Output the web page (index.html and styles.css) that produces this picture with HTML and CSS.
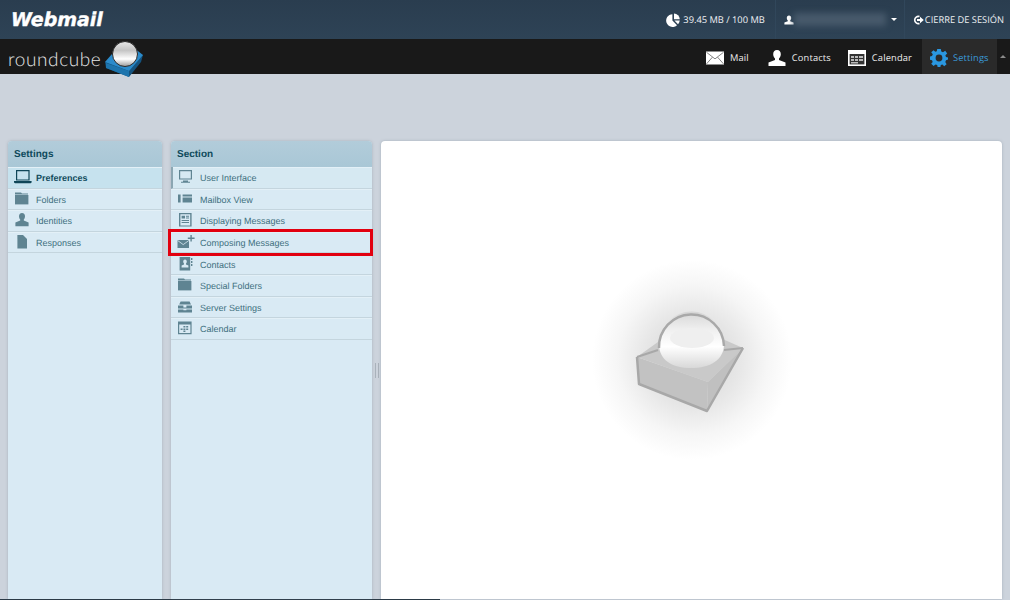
FILE: index.html
```html
<!DOCTYPE html>
<html lang="en">
<head>
  <meta charset="UTF-8" />
  <title>Roundcube Webmail - Settings</title>
  <link rel="stylesheet" href="styles.css">
</head>
<body>
  <!-- cPanel bar -->
  <div class="topbar">
    <div class="webmail-logo">Webmail</div>
    <div class="top-items">
      <div class="top-item quota">
        <svg class="top-icon" viewBox="0 0 14 14"><path d="M6.4 1.2V7.6L11 12.2A6.4 6.4 0 1 1 6.4 1.2Z"/><path d="M8 0.4A6.2 6.2 0 0 1 13.8 6.2H8Z"/><path d="M8.4 7.6H13.8A6.4 6.4 0 0 1 12 11.2Z"/></svg>
        <span>39.45 MB / 100 MB</span>
      </div>
      <div class="top-item user">
        <svg class="user-icon" viewBox="0 0 10 10"><path d="M5 0.5C6.5 0.5 7.2 1.7 7.2 3.1C7.2 4.2 6.7 5.2 6.2 5.6V6.3L9.6 7.6V9.6H0.4V7.6L3.8 6.3V5.6C3.3 5.2 2.8 4.2 2.8 3.1C2.8 1.7 3.5 0.5 5 0.5Z"/></svg>
        <div class="user-blur"></div>
        <div class="caret-down"></div>
      </div>
      <div class="top-item logout">
        <svg class="logout-icon" viewBox="0 0 11 10"><path d="M6.5 1.6A3.6 3.6 0 1 0 6.5 8.4" fill="none" stroke="#fff" stroke-width="1.6"/><path d="M4 3.9H7V1.8L10.8 5L7 8.2V6.1H4Z"/></svg>
        <span>CIERRE DE SESIÓN</span>
      </div>
    </div>
  </div>

  <!-- Roundcube task bar -->
  <div class="navbar">
    <div class="rc-logo">
      <span class="rc-name">roundcube</span>
      <svg class="rc-cube" viewBox="0 0 40 38">
        <defs>
          <linearGradient id="ball" x1="0" y1="0" x2="0" y2="1">
            <stop offset="0" stop-color="#e8e8e8"/>
            <stop offset="0.35" stop-color="#c4c4c4"/>
            <stop offset="0.7" stop-color="#fff"/>
            <stop offset="1" stop-color="#9a9a9a"/>
          </linearGradient>
        </defs>
        <path d="M1 22L39 15L37 22L25 37L2 28Z" fill="#14537f"/>
        <path d="M1 22L25 31L39 15L30 8L8 14Z" fill="#2b8bcb"/>
        <path d="M2 23L25 31L25 37L2 28Z" fill="#1d74ad"/>
        <circle cx="21" cy="14" r="12.5" fill="url(#ball)" stroke="#2a2a2a" stroke-width="1"/>
      </svg>
    </div>
    <div class="tasks">
      <a class="task task-mail">
        <svg class="task-icon" viewBox="0 0 18 13"><path d="M0 0H18V13H0Z" fill="#fff"/><path d="M0.5 0.8L9 7.4L17.5 0.8M0.5 12.4L6.5 5.6M17.5 12.4L11.5 5.6" fill="none" stroke="#777" stroke-width="0.9"/></svg>
        <span>Mail</span>
      </a>
      <a class="task task-contacts">
        <svg class="task-icon" viewBox="0 0 18 16"><path d="M9 0C11.6 0 12.8 1.9 12.8 4.2C12.8 6.1 11.9 7.8 11 8.5V10L17.5 12.5V16H0.5V12.5L7 10V8.5C6.1 7.8 5.2 6.1 5.2 4.2C5.2 1.9 6.4 0 9 0Z" fill="#fff"/></svg>
        <span>Contacts</span>
      </a>
      <a class="task task-calendar">
        <svg class="task-icon" viewBox="0 0 18 16"><path d="M0 0H18V16H0Z" fill="#fff"/><path d="M1.6 4H16.4V14.4H1.6Z" fill="#333"/><path d="M3 6H6V8H3ZM7 6H10V8H7ZM11 6H15V8H11ZM3 9H6V11H3ZM7 9H10V11H7ZM11 9H15V11H11ZM3 12H10V13.4H3Z" fill="#bbb"/></svg>
        <span>Calendar</span>
      </a>
      <a class="task selected">
        <svg class="task-icon gear" viewBox="0 0 18 18"><path fill-rule="evenodd" d="M7.2 0H10.8L11.3 2.5L13 3.2L15.2 1.8L17.2 4.4L15.4 6.2L16 8L18 8.6V10.6L16 11.2L15.3 13L16.6 15.2L14.2 17.2L12.4 15.5L10.8 16L10.4 18H7.6L7.2 16L5.5 15.4L3.6 17L1.2 14.8L2.7 13L2 11.2L0 10.8V7.6L2 7.1L2.8 5.2L1.2 3.3L3.6 1.2L5.3 2.7L6.8 2.2ZM9 5.6A3.4 3.4 0 1 0 9 12.4A3.4 3.4 0 1 0 9 5.6Z"/></svg>
        <span>Settings</span>
      </a>
      <div class="caret-up"></div>
    </div>
  </div>

  <div class="main">
    <div class="panel settings-panel">
      <div class="panel-head">Settings</div>
      <div class="row active">
        <svg class="row-icon dark" viewBox="0 0 18 14"><path fill-rule="evenodd" d="M2 0H15.6V10.6H2ZM3.2 1.2V9.4H14.4V1.2Z"/><path d="M0 11H17.6V12.4L16.6 13.2H1L0 12.4Z"/></svg>
        <span>Preferences</span>
      </div>
      <div class="row">
        <svg class="row-icon" viewBox="0 0 18 14"><path d="M1 0.5H7L8 1.6H14V2.4H1Z"/><path d="M1 3H14.4V12.4H1Z"/></svg>
        <span>Folders</span>
      </div>
      <div class="row">
        <svg class="row-icon" viewBox="0 0 18 14"><path d="M8 0C10 0 11 1.4 11 3.2C11 4.6 10.4 5.8 9.8 6.4V7.6L14.6 9.6V13.2H1.4V9.6L6.2 7.6V6.4C5.6 5.8 5 4.6 5 3.2C5 1.4 6 0 8 0Z"/></svg>
        <span>Identities</span>
      </div>
      <div class="row">
        <svg class="row-icon" viewBox="0 0 18 14"><path d="M3.4 0H9L13 4V13.6H3.4Z"/></svg>
        <span>Responses</span>
      </div>
    </div>

    <div class="panel section-panel">
      <div class="panel-head">Section</div>
      <div class="row current">
        <svg class="row-icon" viewBox="0 0 18 14"><path fill-rule="evenodd" d="M2 0H15V9.6H2ZM3.2 1.2V8.4H13.8V1.2Z"/><path d="M6 10.4H11V11.8H13V12.8H4V11.8H6Z"/></svg>
        <span>User Interface</span>
      </div>
      <div class="row">
        <svg class="row-icon" viewBox="0 0 18 14"><path d="M1 2.6H3.6V10.6H1ZM5.6 2.6H15V4.6H5.6ZM5.6 5.6H15V10.6H5.6Z"/></svg>
        <span>Mailbox View</span>
      </div>
      <div class="row">
        <svg class="row-icon" viewBox="0 0 18 14"><path fill-rule="evenodd" d="M2 0H14.6V13.6H2ZM3.4 1.2V12.4H13.2V1.2Z"/><path d="M4.6 2.8H8V5.6H4.6ZM9 2.8H12V3.8H9ZM9 4.6H12V5.6H9ZM4.6 7H12V8H4.6ZM4.6 9H12V10H4.6Z"/></svg>
        <span>Displaying Messages</span>
      </div>
      <div class="row">
        <svg class="row-icon" viewBox="0 0 18 14"><path d="M0.5 5H12V13H0.5Z"/><path d="M0.5 5.4L6.2 9.6L12 5.4" fill="none" stroke="#d9eaf3" stroke-width="0.8"/><path d="M13.4 0H14.8V2.6H17.6V4H14.8V6.6H13.4V4H10.8V2.6H13.4Z"/></svg>
        <span>Composing Messages</span>
      </div>
      <div class="row">
        <svg class="row-icon" viewBox="0 0 18 14"><path fill-rule="evenodd" d="M2.6 0H13.2V13.6H2.6ZM8 2.4C6.8 2.4 6.2 3.4 6.2 4.6C6.2 5.4 6.6 6.2 7 6.6V7.6L4.6 8.6V10.6H11.4V8.6L9 7.6V6.6C9.4 6.2 9.8 5.4 9.8 4.6C9.8 3.4 9.2 2.4 8 2.4Z"/><path d="M14 1H15.4V3H14ZM14 4H15.4V6H14ZM14 7H15.4V9H14Z"/></svg>
        <span>Contacts</span>
      </div>
      <div class="row">
        <svg class="row-icon" viewBox="0 0 18 14"><path d="M1 0.5H7L8 1.6H14V2.4H1Z"/><path d="M1 3H14.4V12.4H1Z"/></svg>
        <span>Special Folders</span>
      </div>
      <div class="row">
        <svg class="row-icon" viewBox="0 0 18 14"><path d="M3.6 1.6H12.6L14 4.6H2.2ZM1 5.4H6.4V7.4H9.4V5.4H15V8.6H1ZM1 9.4H6.4V10.2H9.4V9.4H15V12.6H1Z"/></svg>
        <span>Server Settings</span>
      </div>
      <div class="row">
        <svg class="row-icon" viewBox="0 0 18 14"><path fill-rule="evenodd" d="M1 0.4H14.6V13.2H1ZM2.2 3.4V12H13.4V3.4Z"/><path d="M6.4 5H8.4V6.6H6.4ZM9.2 5H11.2V6.6H9.2ZM3.6 7.4H5.6V9H3.6ZM6.4 7.4H8.4V9H6.4ZM9.2 7.4H11.2V9H9.2ZM6.4 9.6H8.4V11H6.4Z"/></svg>
        <span>Calendar</span>
      </div>
      <!-- red annotation round Composing Messages -->
      <div class="annotation"></div>
    </div>

    <div class="splitter"><div class="grip"></div></div>

    <div class="panel content-panel">
      <svg class="watermark" viewBox="0 0 200 200">
        <defs>
          <radialGradient id="glow">
            <stop offset="0" stop-color="#d0d0d0"/>
            <stop offset="0.5" stop-color="#e8e8e8"/>
            <stop offset="0.75" stop-color="#f6f6f6"/>
            <stop offset="1" stop-color="#fff"/>
          </radialGradient>
          <linearGradient id="dome" x1="0" y1="0" x2="0" y2="1">
            <stop offset="0" stop-color="#d6d6d6"/>
            <stop offset="0.3" stop-color="#eeeeee"/>
            <stop offset="0.62" stop-color="#fff"/>
            <stop offset="1" stop-color="#d8d8d8"/>
          </linearGradient>
        </defs>
        <circle cx="100" cy="100" r="100" fill="url(#glow)"/>
        <path d="M45 97L116 122L115 151L47 124Z" fill="#c2c2c2"/>
        <path d="M45 97L116 122L151 88L110 70L66 82Z" fill="#c9c9c9"/>
        <path d="M116 122L151 88L115 151Z" fill="#c0c0c0"/>
        <path d="M45 97L47 124L115 151L151 88" fill="none" stroke="#a8a8a8" stroke-width="2.5" stroke-linejoin="round"/>
        <path d="M45 97L66 90M132 90L151 88" fill="none" stroke="#a8a8a8" stroke-width="2"/>
        <path d="M67 84A32.5 32.5 0 1 1 132 84C132 100 118 108 99 108C80 108 67 100 67 84Z" fill="url(#dome)"/>
        <path d="M67 88A32.5 32.5 0 1 1 132 86" fill="none" stroke="#a9a9a9" stroke-width="2.5"/>
        <ellipse cx="100" cy="78" rx="22" ry="10" fill="#efefef"/>
      </svg>
    </div>
  </div>
  <div class="bottom-line"></div>
</body>
</html>
```

FILE: styles.css
```css
html, body {
  margin: 0;
  padding: 0;
  width: 100%;
  height: 100%;
  overflow: hidden;
}
body {
  display: flex;
  flex-direction: column;
  background-color: #ccd3dc;
  font-family: "Liberation Sans", sans-serif;
  font-size: 9px;
  text-rendering: geometricPrecision;
}

/* ---------- top bar ---------- */
.topbar {
  height: 39px;
  flex: none;
  display: flex;
  justify-content: space-between;
  align-items: center;
  background: linear-gradient(#2a3d4f, #2e4356);
  color: #eef1f4;
}
.webmail-logo {
  margin-left: 11px;
  font-family: "DejaVu Sans", sans-serif;
  font-style: italic;
  font-weight: bold;
  font-size: 19px;
  color: #fff;
  -webkit-text-stroke: 0.4px #fff;
}
.top-items {
  display: flex;
  align-items: center;
  height: 100%;
  font-family: "Open Sans", sans-serif;
  font-size: 9.3px;
}
.top-item {
  display: flex;
  align-items: center;
  height: 100%;
}
.top-icon, .user-icon, .logout-icon {
  fill: #fff;
  display: block;
}
.quota {
  padding: 0 10px 0 12px;
}
.top-icon {
  width: 14px;
  height: 14px;
  margin-right: 3px;
}
.user {
  padding-left: 8px;
  width: 130px;
  box-sizing: border-box;
  border-left: 1px solid #31475b;
  border-right: 1px solid #31475b;
}
.user-icon {
  width: 10px;
  height: 10px;
}
.user-blur {
  width: 92px;
  height: 13px;
  background-color: #47596b;
  filter: blur(3px);
}
.caret-down {
  margin-left: 5px;
  border-left: 3.5px solid transparent;
  border-right: 3.5px solid transparent;
  border-top: 3.5px solid #fff;
}
.logout {
  padding: 0 6px 0 8px;
}
.logout-icon {
  width: 11px;
  height: 10px;
  margin-right: 1px;
}

/* ---------- task bar ---------- */
.navbar {
  height: 35px;
  flex: none;
  display: flex;
  justify-content: space-between;
  background-color: #191919;
  color: #eee;
  position: relative;
  z-index: 1;
}
.rc-logo {
  display: flex;
  align-items: flex-start;
  margin-left: 8px;
}
.rc-name {
  margin-top: 9px;
  font-family: "Lato", sans-serif;
  font-weight: 300;
  font-size: 19px;
  line-height: 24px;
  letter-spacing: 0.6px;
  color: #e6e6e6;
}
.rc-cube {
  width: 40px;
  height: 38px;
  margin: 1px 0 0 3px;
  overflow: visible;
}
.tasks {
  display: flex;
  align-items: stretch;
  font-family: "Open Sans", sans-serif;
  font-size: 9.3px;
  letter-spacing: 0.15px;
}
.task {
  display: flex;
  align-items: center;
  gap: 6px;
  padding-top: 2px;
}
.task-mail {
  margin-right: 19px;
}
.task-contacts {
  margin-right: 17px;
}
.task-calendar {
  margin-right: 10px;
}
.task-icon {
  width: 18px;
  height: 16px;
  display: block;
}
.task.selected {
  width: 75px;
  box-sizing: border-box;
  padding-left: 8px;
  gap: 5px;
  background-color: #2a2a2a;
  color: #3a9ad9;
}
.gear {
  height: 18px;
  fill: #2a97e0;
}
.caret-up {
  align-self: center;
  width: 0;
  height: 0;
  border-left: 3px solid transparent;
  border-right: 3px solid transparent;
  border-bottom: 3px solid #8a8a8a;
  margin: 0 4px 0 3px;
}

/* ---------- panels ---------- */
.main {
  flex: 1;
  min-height: 0;
  display: flex;
  padding: 67px 8px 0 8px;
}
.panel {
  border-radius: 4px 4px 0 0;
  box-shadow: 0 0 3px rgba(90, 110, 125, 0.35);
}
.settings-panel {
  width: 154px;
  margin-right: 9px;
  background-color: #d9eaf4;
}
.section-panel {
  width: 201px;
  background-color: #d9eaf4;
  position: relative;
}
.panel-head {
  height: 26px;
  box-sizing: border-box;
  line-height: 28px;
  padding-left: 6px;
  border-radius: 4px 4px 0 0;
  background: linear-gradient(#b2ccda, #a9c7d6);
  color: #0f4a5c;
  font-size: 10px;
  font-weight: bold;
}
.row {
  height: 21.6px;
  box-sizing: border-box;
  display: flex;
  align-items: center;
  border-bottom: 1px solid #c4d5de;
  box-shadow: inset 0 1px 0 #e3f0f7;
  color: #40707e;
}
.row span {
  margin: 2px 0 0 4px;
}
.section-panel .row span {
  margin-left: 5px;
}
.row-icon {
  width: 18px;
  height: 14px;
  margin-left: 6px;
  flex: none;
  fill: #5f8492;
}
.row-icon.dark {
  fill: #0f4658;
}
.row.active {
  background-color: #c6e2ee;
  color: #0f4a5c;
  font-weight: bold;
}
.row.current {
  background-color: #d6e9f2;
  border-left: 2px solid #8ba6b2;
}
.row.current .row-icon {
  margin-left: 4px;
}
.annotation {
  position: absolute;
  top: 88px;
  left: -3px;
  right: -1px;
  height: 27px;
  box-sizing: border-box;
  border: 3px solid #e2000f;
}
.splitter {
  width: 9px;
  flex: none;
  display: flex;
  align-items: center;
  justify-content: center;
}
.grip {
  width: 2px;
  height: 15px;
  border-left: 1px solid #a9b2bb;
  border-right: 1px solid #a9b2bb;
}
.content-panel {
  flex: 1;
  display: flex;
  align-items: center;
  justify-content: center;
  background-color: #fff;
}
.watermark {
  width: 200px;
  height: 200px;
  margin-bottom: 20px;
  filter: blur(0.6px);
}
.bottom-line {
  width: 440px;
  height: 1px;
  flex: none;
  background-color: #2b3a46;
}
```
